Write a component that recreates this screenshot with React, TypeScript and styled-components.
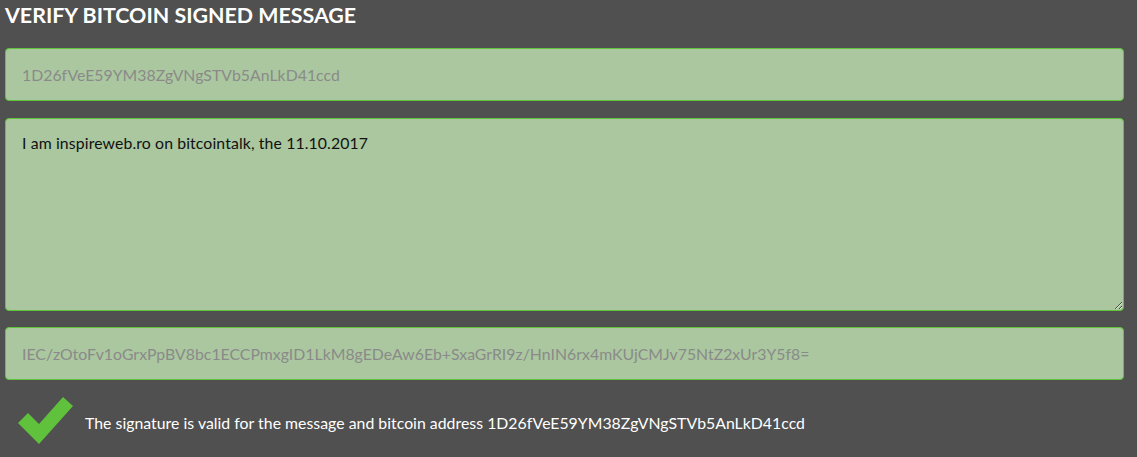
import React from "react";
import styled, { createGlobalStyle } from "styled-components";

const Global = createGlobalStyle`
  html, body { margin: 0; padding: 0; background: #505050; }
  body { font-family: Lato, "Open Sans", sans-serif; }
  * { box-sizing: border-box; }
`;

const Page = styled.div`
  display: flex;
  flex-direction: column;
  padding: 0 13px 0 5px;
  width: 1137px;
  height: 457px;
  background: #505050;
`;

const Title = styled.h1`
  margin: 3px 0 0;
  font-size: 21.4px;
  line-height: 24px;
  font-weight: 700;
  color: #ffffff;
  letter-spacing: 0;
`;

const fieldBase = `
  width: 100%;
  background: #aac79f;
  border: 1px solid #5fc43a;
  border-radius: 4px;
  padding: 0 16px;
  font-family: Lato, "Open Sans", sans-serif;
  font-size: 15.8px;
  outline: none;
`;

const Input = styled.input`
  ${fieldBase}
  height: 53px;
  margin-top: ${(p: { $top: number }) => p.$top}px;
  color: #8a8a8a;
  letter-spacing: 0.03px;
`;

const Area = styled.textarea`
  ${fieldBase}
  height: 193px;
  margin-top: 17px;
  padding-top: 14px;
  color: #111111;
  line-height: 20px;
  letter-spacing: 0.12px;
  resize: vertical;
`;

const Result = styled.div`
  display: flex;
  align-items: center;
  gap: 12px;
  margin-top: 17px;
  padding-left: 13px;
`;

const Message = styled.span`
  color: #ffffff;
  font-size: 15.8px;
  letter-spacing: 0.03px;
  margin-top: 4px;
`;

const Check = () => (
  <svg width="55" height="47" viewBox="18 397 55 47">
    <polygon points="18,423 28,413 39,424 63,397 73,406 39,444" fill="#5fc13c" />
  </svg>
);

export default function App() {
  return (
    <>
      <Global />
      <Page>
        <Title>VERIFY BITCOIN SIGNED MESSAGE</Title>
        <Input $top={21} readOnly value="1D26fVeE59YM38ZgVNgSTVb5AnLkD41ccd" />
        <Area readOnly value="I am inspireweb.ro on bitcointalk, the 11.10.2017" />
        <Input
          $top={16}
          readOnly
          value="IEC/zOtoFv1oGrxPpBV8bc1ECCPmxgID1LkM8gEDeAw6Eb+SxaGrRI9z/HnIN6rx4mKUjCMJv75NtZ2xUr3Y5f8="
        />
        <Result>
          <Check />
          <Message>
            The signature is valid for the message and bitcoin address 1D26fVeE59YM38ZgVNgSTVb5AnLkD41ccd
          </Message>
        </Result>
      </Page>
    </>
  );
}
